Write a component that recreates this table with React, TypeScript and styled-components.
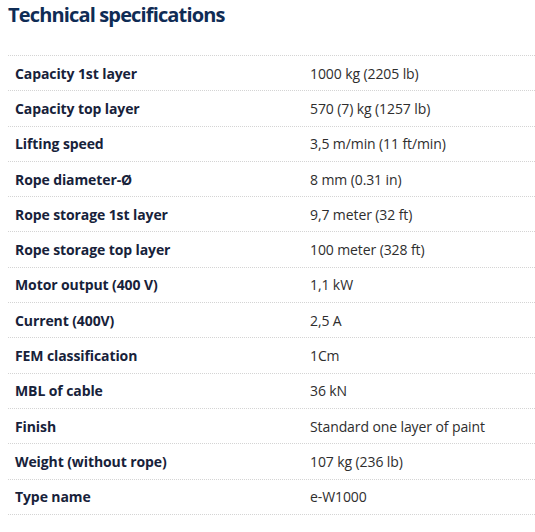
import React from "react";
import styled, { createGlobalStyle } from "styled-components";

const Global = createGlobalStyle`
  html, body { margin: 0; padding: 0; background: #fff; }
  body { font-family: "Open Sans", "Liberation Sans", sans-serif; }
`;

const Page = styled.div`
  padding: 0 0 0 8px;
`;

const Title = styled.h2`
  margin: 0;
  padding-top: 1px;
  font-size: 20px;
  line-height: 28px;
  font-weight: 700;
  color: #0f2c55;
  letter-spacing: -0.85px;
  height: 54px;
`;

const Table = styled.div`
  border-top: 1px dotted #d4d4d4;
`;

const Row = styled.div`
  display: grid;
  grid-template-columns: 295px 1fr;
  height: 34.3px;
  align-items: center;
  border-bottom: 1px dotted #d4d4d4;
  font-size: 14px;
  letter-spacing: -0.1px;
`;

const Label = styled.div`
  padding-left: 7px;
  font-weight: 700;
  color: #17223a;
`;

const Value = styled.div`
  padding-left: 7px;
  color: #2e2e2e;
`;

const rows: [string, string][] = [
  ["Capacity 1st layer", "1000 kg (2205 lb)"],
  ["Capacity top layer", "570 (7) kg (1257 lb)"],
  ["Lifting speed", "3,5 m/min (11 ft/min)"],
  ["Rope diameter-Ø", "8 mm (0.31 in)"],
  ["Rope storage 1st layer", "9,7 meter (32 ft)"],
  ["Rope storage top layer", "100 meter (328 ft)"],
  ["Motor output (400 V)", "1,1 kW"],
  ["Current (400V)", "2,5 A"],
  ["FEM classification", "1Cm"],
  ["MBL of cable", "36 kN"],
  ["Finish", "Standard one layer of paint"],
  ["Weight (without rope)", "107 kg (236 lb)"],
  ["Type name", "e-W1000"],
];

export default function App() {
  return (
    <Page>
      <Global />
      <Title>Technical specifications</Title>
      <Table>
        {rows.map(([k, v]) => (
          <Row key={k}>
            <Label>{k}</Label>
            <Value>{v}</Value>
          </Row>
        ))}
      </Table>
    </Page>
  );
}
